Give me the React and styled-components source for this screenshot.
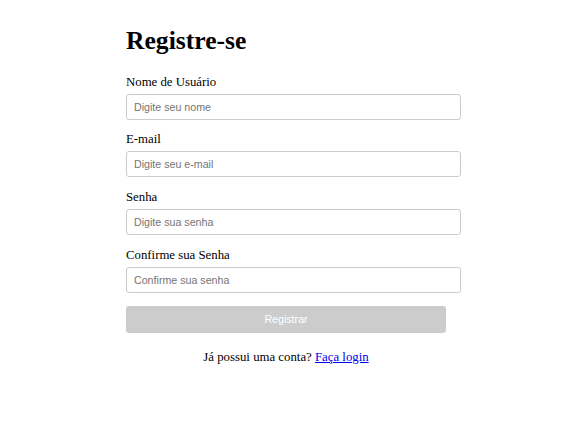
import React from 'react';
import styled, { createGlobalStyle } from 'styled-components';

const GlobalStyle = createGlobalStyle`
  body {
    margin: 0;
    background: #fff;
    font-family: "Liberation Serif", "Times New Roman", serif;
  }
`;

const fields = [
  { id: 'username', label: 'Nome de Usuário', type: 'text', placeholder: 'Digite seu nome' },
  { id: 'email', label: 'E-mail', type: 'email', placeholder: 'Digite seu e-mail' },
  { id: 'password', label: 'Senha', type: 'password', placeholder: 'Digite sua senha' },
  { id: 'confirm', label: 'Confirme sua Senha', type: 'password', placeholder: 'Confirme sua senha' },
];

function App() {
  return (
    <>
      <GlobalStyle />
      <Container>
        <Title>Registre-se</Title>
        <form onSubmit={(e) => e.preventDefault()}>
          {fields.map((field) => (
            <Field key={field.id}>
              <Label htmlFor={field.id}>{field.label}</Label>
              <Input id={field.id} type={field.type} placeholder={field.placeholder} />
            </Field>
          ))}
          <SubmitButton type="submit" disabled>Registrar</SubmitButton>
        </form>
        <LoginText>
          Já possui uma conta?
          {' '}
          <LoginLink href="#login">Faça login</LoginLink>
        </LoginText>
      </Container>
    </>
  );
}

const Container = styled('div')`
  width: 320px;
  margin-left: 126px;
  padding-top: 26px;
`;

const Title = styled('h1')`
  margin: 0 0 18.5px;
  font-size: 25.6px;
  font-weight: bold;
  color: #000;
`;

const Field = styled('div')`
  margin-bottom: 12.7px;
`;

const Label = styled('label')`
  display: block;
  margin-bottom: 4px;
  font-size: 12.8px;
  line-height: 15px;
  color: #000;
`;

const Input = styled('input')`
  display: block;
  width: 100%;
  height: 24px;
  padding: 0 6px 0 7px;
  box-sizing: content-box;
  border: 1px solid #ccc;
  border-radius: 3px;
  font-family: "Liberation Sans", Arial, sans-serif;
  font-size: 10.67px;
  color: #000;
  background: #fff;
  outline: none;

  &::placeholder {
    color: #757575;
  }
`;

const SubmitButton = styled('button')`
  display: block;
  width: 320px;
  height: 27px;
  margin-top: 13px;
  border: none;
  border-radius: 3px;
  background: #ccc;
  color: #fff;
  font-family: "Liberation Sans", Arial, sans-serif;
  font-size: 10.67px;
  cursor: not-allowed;
`;

const LoginText = styled('p')`
  margin: 17px 0 0;
  text-align: center;
  font-size: 12.8px;
  color: #000;
`;

const LoginLink = styled('a')`
  color: #0000ee;
  text-decoration: underline;
`;

export default App;
